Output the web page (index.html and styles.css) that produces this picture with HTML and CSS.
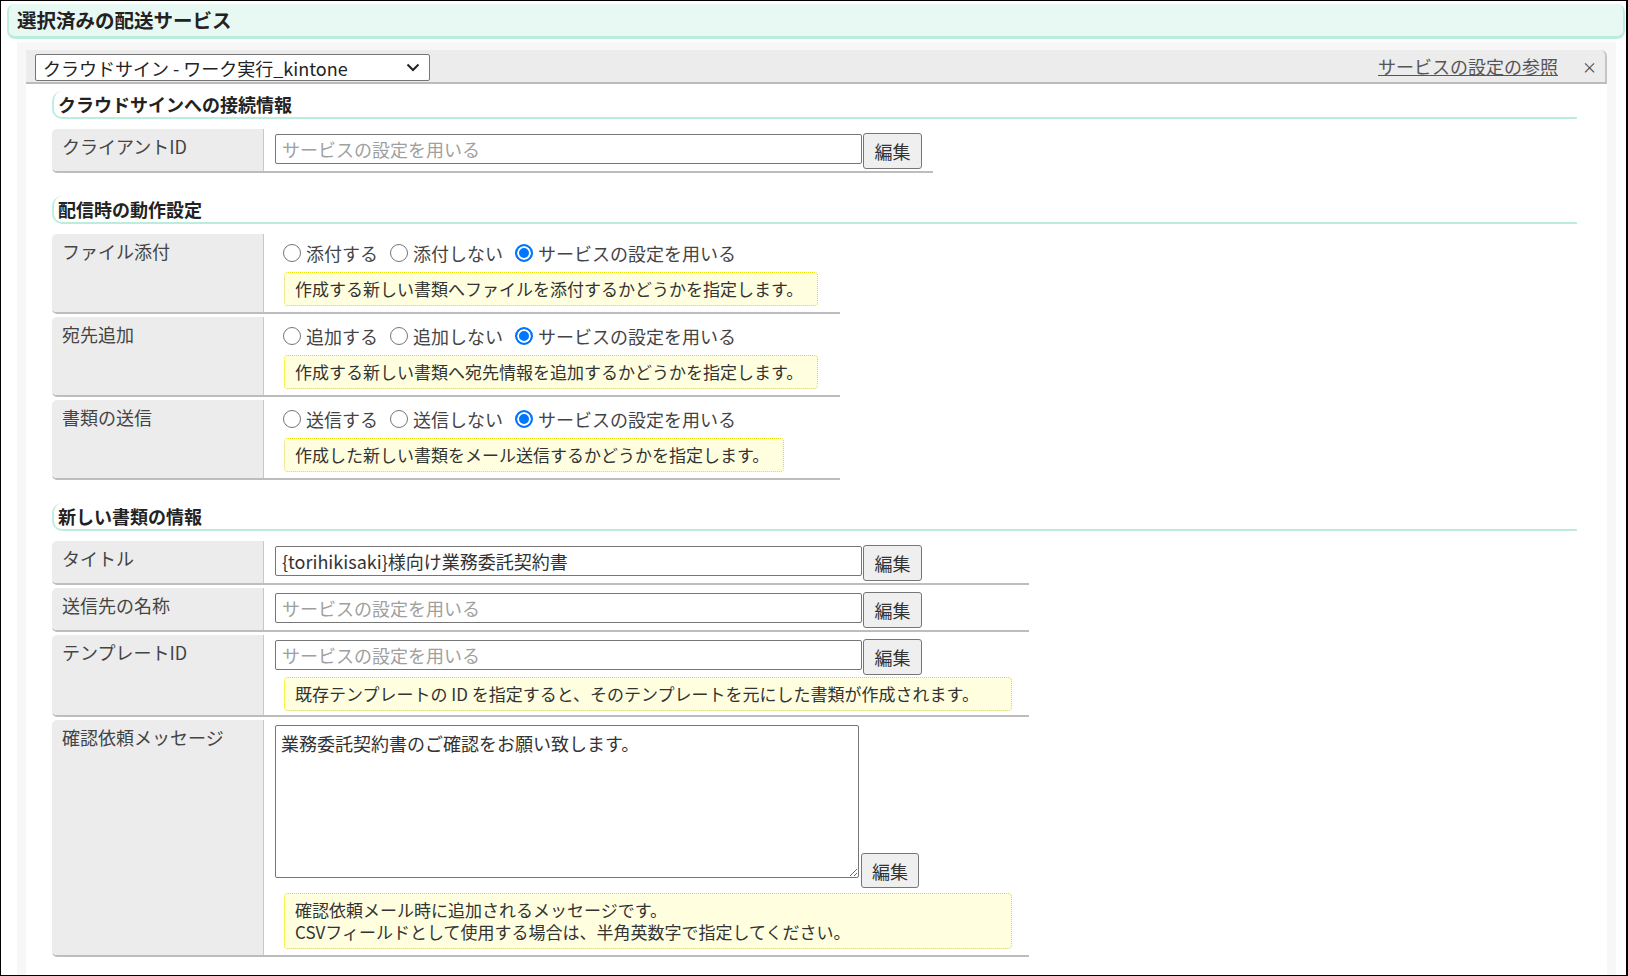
FILE: index.html
```html
<!DOCTYPE html>
<html lang="ja">
<head>
    <meta charset="UTF-8">
    <title>選択済みの配送サービス</title>
    <link rel="stylesheet" href="styles.css">
</head>
<body>
    <div class="frame">
        <div class="selected-head">選択済みの配送サービス</div>

        <div class="service-panel">
            <div class="service-bar">
                <span class="select-wrap">
                    <select class="service-select">
                        <option>クラウドサイン - ワーク実行_kintone</option>
                    </select>
                    <svg class="select-arrow" width="14" height="9" viewBox="0 0 14 9"><path d="M1.5 1.5 L7 7 L12.5 1.5" fill="none" stroke="#222" stroke-width="2"/></svg>
                </span>
                <div class="bar-links">
                    <a href="#" class="ref-link">サービスの設定の参照</a>
                    <span class="close">×</span>
                </div>
            </div>

            <div class="service-body">
                <!-- 接続情報 -->
                <h3 class="sec-title">クラウドサインへの接続情報</h3>
                <div class="fields fields-conn">
                    <div class="field">
                        <div class="field-label">クライアントID</div>
                        <div class="field-value">
                            <div class="input-line">
                                <input type="text" class="text-input" placeholder="サービスの設定を用いる">
                                <button type="button" class="edit-btn">編集</button>
                            </div>
                        </div>
                    </div>
                </div>

                <!-- 動作設定 -->
                <h3 class="sec-title">配信時の動作設定</h3>
                <div class="fields fields-action">
                    <div class="field">
                        <div class="field-label">ファイル添付</div>
                        <div class="field-value">
                            <div class="radio-line">
                                <label class="radio"><input type="radio" name="attach">添付する</label>
                                <label class="radio"><input type="radio" name="attach">添付しない</label>
                                <label class="radio"><input type="radio" name="attach" checked>サービスの設定を用いる</label>
                            </div>
                            <div class="note">作成する新しい書類へファイルを添付するかどうかを指定します。</div>
                        </div>
                    </div>
                    <div class="field">
                        <div class="field-label">宛先追加</div>
                        <div class="field-value">
                            <div class="radio-line">
                                <label class="radio"><input type="radio" name="dest">追加する</label>
                                <label class="radio"><input type="radio" name="dest">追加しない</label>
                                <label class="radio"><input type="radio" name="dest" checked>サービスの設定を用いる</label>
                            </div>
                            <div class="note">作成する新しい書類へ宛先情報を追加するかどうかを指定します。</div>
                        </div>
                    </div>
                    <div class="field">
                        <div class="field-label">書類の送信</div>
                        <div class="field-value">
                            <div class="radio-line">
                                <label class="radio"><input type="radio" name="send">送信する</label>
                                <label class="radio"><input type="radio" name="send">送信しない</label>
                                <label class="radio"><input type="radio" name="send" checked>サービスの設定を用いる</label>
                            </div>
                            <div class="note">作成した新しい書類をメール送信するかどうかを指定します。</div>
                        </div>
                    </div>
                </div>

                <!-- 書類の情報 -->
                <h3 class="sec-title">新しい書類の情報</h3>
                <div class="fields fields-doc">
                    <div class="field">
                        <div class="field-label">タイトル</div>
                        <div class="field-value">
                            <div class="input-line">
                                <input type="text" class="text-input" value="{torihikisaki}様向け業務委託契約書">
                                <button type="button" class="edit-btn">編集</button>
                            </div>
                        </div>
                    </div>
                    <div class="field">
                        <div class="field-label">送信先の名称</div>
                        <div class="field-value">
                            <div class="input-line">
                                <input type="text" class="text-input" placeholder="サービスの設定を用いる">
                                <button type="button" class="edit-btn">編集</button>
                            </div>
                        </div>
                    </div>
                    <div class="field">
                        <div class="field-label">テンプレートID</div>
                        <div class="field-value">
                            <div class="input-line">
                                <input type="text" class="text-input" placeholder="サービスの設定を用いる">
                                <button type="button" class="edit-btn">編集</button>
                            </div>
                            <div class="note note-wide note-tight">既存テンプレートの ID を指定すると、そのテンプレートを元にした書類が作成されます。</div>
                        </div>
                    </div>
                    <div class="field">
                        <div class="field-label">確認依頼メッセージ</div>
                        <div class="field-value">
                            <div class="area-line">
                                <textarea class="text-area">業務委託契約書のご確認をお願い致します。</textarea>
                                <button type="button" class="edit-btn">編集</button>
                            </div>
                            <div class="note note-wide note-area">確認依頼メール時に追加されるメッセージです。<br>CSVフィールドとして使用する場合は、半角英数字で指定してください。</div>
                        </div>
                    </div>
                </div>
            </div>
        </div>
    </div>
</body>
</html>
```

FILE: styles.css
```css
html, body {
    margin: 0;
    height: 100%;
}
body {
    font-family: "Noto Sans CJK JP", "Noto Sans", sans-serif;
    color: #333;
    background-color: #ffffff;
}
.frame {
    display: flex;
    flex-direction: column;
    height: 976px;
    box-sizing: border-box;
    border: 1px solid #000;
    border-right-width: 2px;
    overflow: hidden;
}

/* top heading */
.selected-head {
    margin: 3px 1px 0 6px;
    height: 32px;
    line-height: 32px;
    padding-left: 8px;
    font-size: 19.5px;
    font-weight: bold;
    color: #222;
    background-color: #e8f8f2;
    border-left: 2px solid #bfeedf;
    border-right: 2px solid #bfeedf;
    border-bottom: 3px solid #bcecdc;
    border-radius: 8px;
}

/* service panel */
.service-panel {
    flex: 1;
    display: flex;
    flex-direction: column;
    margin: 3px 10px 0 16px;
    padding: 8px 9px 0 9px;
    background-color: #f7f7f7;
}
.service-bar {
    display: flex;
    align-items: center;
    justify-content: space-between;
    height: 32px;
    padding: 0 8px 0 9px;
    background-color: #ececec;
    border-bottom: 2px solid #bbbbbb;
    border-right: 2px solid #c4c4c4;
    border-top-right-radius: 6px;
}
.select-wrap {
    position: relative;
    display: inline-block;
    margin-top: 2px;
}
.service-select {
    display: block;
    width: 395px;
    height: 27px;
    padding: 0 30px 0 7px;
    font-family: inherit;
    font-size: 18px;
    color: #222;
    background-color: #fff;
    border: 1px solid #767676;
    border-radius: 2px;
    appearance: none;
    -webkit-appearance: none;
}
.select-arrow {
    position: absolute;
    right: 10px;
    top: 9px;
    pointer-events: none;
}
.bar-links {
    display: flex;
    align-items: center;
    font-size: 18px;
    color: #555;
}
.ref-link {
    color: #555;
    text-decoration: underline;
}
.close {
    margin-left: 24px;
    font-size: 15px;
    color: #444;
}
.service-body {
    flex: 1;
    padding: 7px 30px 20px 26px;
    background-color: #ffffff;
}

/* section headings */
.sec-title {
    margin: 0 0 10px 0;
    height: 26px;
    line-height: 26px;
    padding-left: 4px;
    font-size: 18px;
    font-weight: bold;
    color: #222;
    border-left: 2px solid #bfeedf;
    border-bottom: 2px solid #bcecdc;
    border-radius: 10px 0 0 10px;
}

/* field rows */
.fields {
    display: flex;
    flex-direction: column;
    gap: 3px;
    margin-bottom: 23px;
}
.fields-conn {
    width: 881px;
}
.fields-action {
    width: 788px;
}
.fields-doc {
    width: 977px;
}
.field {
    display: grid;
    grid-template-columns: 212px 1fr;
    border-bottom: 2px solid #bdbdbd;
    border-radius: 5px 0 0 5px;
    overflow: hidden;
}
.field-label {
    padding: 4px 0 0 10px;
    font-size: 18px;
    line-height: 26px;
    color: #444;
    background-color: #ececec;
    border-right: 1px solid #c8c8c8;
}
.field-value {
    padding: 5px 9px 2px 11px;
}

.input-line {
    display: flex;
    align-items: flex-start;
}
.text-input {
    box-sizing: border-box;
    width: 587px;
    height: 30px;
    padding: 0 6px;
    font-family: inherit;
    font-size: 18px;
    color: #333;
    border: 1px solid #767676;
    border-radius: 2px;
}
.text-input::placeholder {
    color: #a0a0a0;
}
.edit-btn {
    box-sizing: border-box;
    width: 59px;
    height: 36px;
    margin: -1px 0 0 1px;
    padding: 0;
    font-family: inherit;
    font-size: 18px;
    color: #333;
    background-color: #efefef;
    border: 1px solid #767676;
    border-radius: 3px;
}

.radio-line {
    display: flex;
    align-items: center;
    height: 28px;
    margin-left: 8px;
    font-size: 18px;
    color: #444;
}
.radio {
    display: flex;
    align-items: center;
    margin-right: 12px;
}
.radio input {
    appearance: none;
    -webkit-appearance: none;
    box-sizing: border-box;
    width: 18px;
    height: 18px;
    margin: 0 5px 0 0;
    border: 1px solid #767676;
    border-radius: 50%;
    background-color: #fff;
}
.radio input:checked {
    border: 2px solid #0075ff;
    background-color: #0075ff;
    box-shadow: inset 0 0 0 2px #fff;
}

.note {
    display: inline-block;
    margin: 5px 0 4px 9px;
    padding: 5px 14px 5px 10px;
    font-size: 17px;
    line-height: 22px;
    color: #333;
    background-color: #ffffe0;
    border: 1px dotted #e2de00;
    border-radius: 4px;
}
.note-wide {
    display: block;
    margin-right: 8px;
}
.note-tight {
    margin-top: 2px;
    margin-bottom: 2px;
}
.note-area {
    margin-top: 5px;
}

.area-line {
    display: flex;
    align-items: flex-end;
}
.text-area {
    box-sizing: border-box;
    width: 584px;
    height: 153px;
    margin: 0 0 10px 0;
    padding: 4px 5px;
    font-family: inherit;
    font-size: 18px;
    line-height: 26px;
    color: #333;
    border: 1px solid #767676;
    border-radius: 2px;
}
.area-line .edit-btn {
    width: 58px;
    height: 35px;
    margin: 0 0 0 2px;
}
```
